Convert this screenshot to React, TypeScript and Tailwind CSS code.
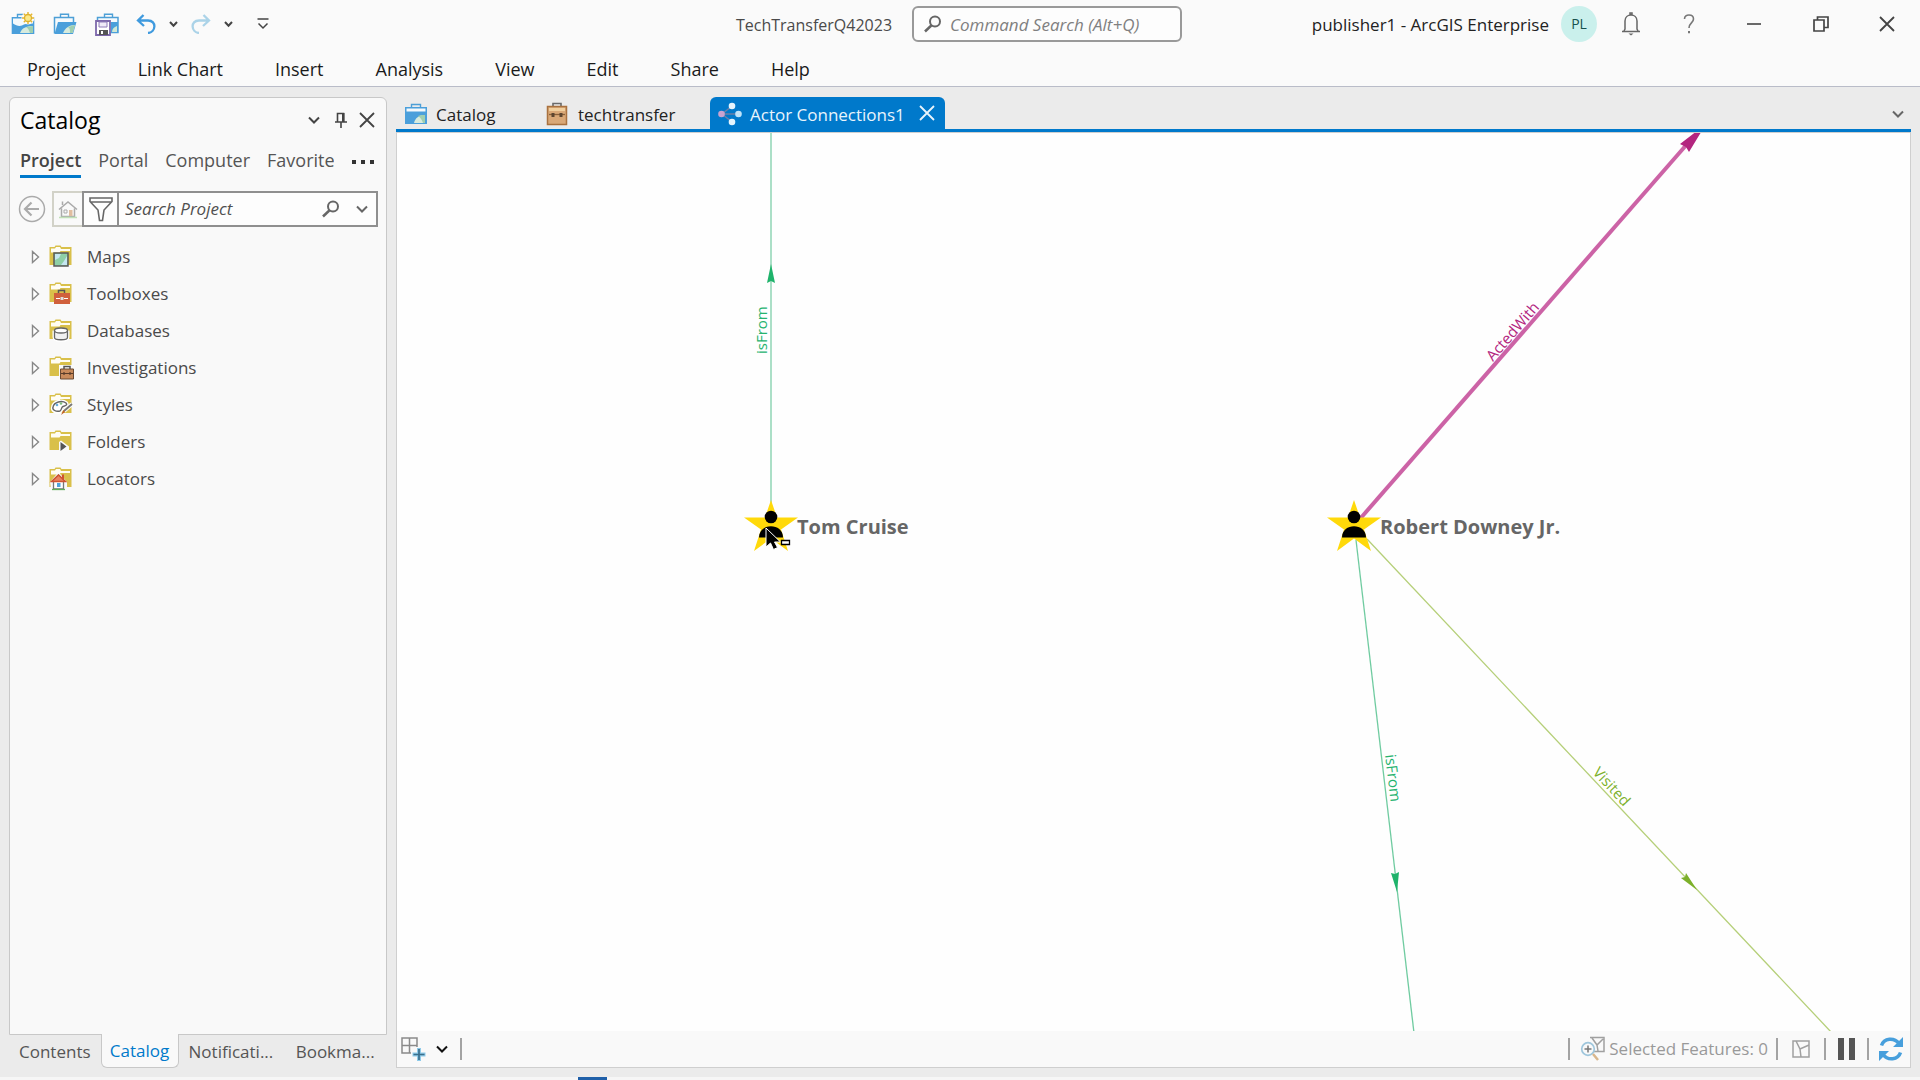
import { ReactNode, useState } from 'react';

const MENU = ['Project', 'Link Chart', 'Insert', 'Analysis', 'View', 'Edit', 'Share', 'Help'];
const CATALOG_TABS = ['Project', 'Portal', 'Computer', 'Favorites'];
const DOCK_TABS = ['Contents', 'Catalog', 'Notificati...', 'Bookma...'];

interface TreeItem {
  label: string;
  badge: ReactNode;
}

const TREE: TreeItem[] = [
  {
    label: 'Maps',
    badge: (
      <>
        <path d="M5 8h14v13H5z" fill="#8ecfa6" stroke="#5a5a5a" strokeWidth="1.5" />
        <path d="M6 9h6l-2 4-4 2zM18 20h-6l3-4 3-5z" fill="#c5e6f0" />
      </>
    ),
  },
  {
    label: 'Toolboxes',
    badge: (
      <>
        <path d="M9.5 11V8.5h6V11" fill="none" stroke="#555" strokeWidth="1.5" />
        <path d="M5 11h16v11H5z" fill="#d0603c" />
        <path d="M7 16.500h4M15 16.500h4" stroke="#fff" strokeWidth="1.2" />
        <path d="M11.500 15h3v3h-3z" fill="#ddd" />
      </>
    ),
  },
  {
    label: 'Databases',
    badge: (
      <>
        <path
          d="M5.500 11.500v6.500c0 4 13 4 13 0v-6.500"
          fill="#f4f4f4"
          stroke="#fff"
          strokeWidth="4"
        />
        <path d="M5.500 11.500v7c0 3 13 3 13 0v-7" fill="#f1f1f1" stroke="#666" strokeWidth="1.3" />
        <ellipse cx="12" cy="11.500" rx="6.500" ry="2.500" fill="#fff" stroke="#666" strokeWidth="1.3" />
      </>
    ),
  },
  {
    label: 'Investigations',
    badge: (
      <>
        <path d="M10 9h16v15H10z" fill="#fafafa" />
        <path d="M15 13v-2.500h6V13" fill="none" stroke="#555" strokeWidth="1.5" />
        <path d="M11.500 13h13v10h-13z" fill="#c98b5c" stroke="#6b4a33" strokeWidth="1" />
        <path d="M12 17.500h12M15 16v3M21 16v3" stroke="#5a3d2a" strokeWidth="1.2" />
      </>
    ),
  },
  {
    label: 'Styles',
    badge: (
      <>
        <path
          d="M4 14c1-5 9-7 13-4 2 2-1 3-3 3.500-2 1-1 3-3 5-4 1-8-1-7-4.500z"
          fill="#fff"
          stroke="#fff"
          strokeWidth="4"
        />
        <path
          d="M4 14c1-5 9-7 13-4 2 2-1 3-3 3.500-2 1-1 3-3 4.500-4 1-8-1-7-4z"
          fill="#fff"
          stroke="#666"
          strokeWidth="1.4"
        />
        <circle cx="8" cy="12" r="1.300" fill="#64aede" />
        <circle cx="12" cy="10.500" r="1.300" fill="#7fbf7f" />
        <path d="M23 11l-8 7" stroke="#fff" strokeWidth="4" />
        <path d="M23 11l-8 7" stroke="#777" strokeWidth="2" />
        <path d="M14.500 17l1.500 2-4 3z" fill="#c05f2c" />
      </>
    ),
  },
  {
    label: 'Folders',
    badge: (
      <>
        <path d="M10 12l2-1.500 8 6V21H10z" fill="#fafafa" />
        <path d="M11.500 12l6 4.500-6 4.500z" fill="#555" />
      </>
    ),
  },
  {
    label: 'Locators',
    badge: (
      <>
        <path d="M1 15L9.500 5 18 15v7H2z" fill="#fafafa" />
        <path d="M4.500 13v9h10v-9l-5-5z" fill="#fff" stroke="#777" strokeWidth="1.3" />
        <path d="M2.500 14.500h14L9.500 8z" fill="#e8825f" stroke="#cf5330" strokeWidth="1.5" />
        <path d="M14 7.500v5" stroke="#cf5330" strokeWidth="2" />
        <path d="M8 16h3.500v4H8z" fill="#4fa3dd" />
        <path d="M3 22.500h13" stroke="#5fae57" strokeWidth="1.300" />
      </>
    ),
  },
];

function Chevron({ className = 'text-[#444]' }: { className?: string }) {
  return (
    <svg width="12" height="8" viewBox="0 0 12 8" fill="none" className={className}>
      <path d="M1 1.500l5 5 5-5" stroke="currentColor" strokeWidth="2" />
    </svg>
  );
}

function SmallChevron() {
  return (
    <svg width="9" height="7" viewBox="0 0 9 7" fill="none">
      <path d="M1 1l3.500 3.800L8 1" stroke="#444" strokeWidth="2" />
    </svg>
  );
}

function CloseIcon({ className }: { className: string }) {
  return (
    <svg width="16" height="16" viewBox="0 0 16 16" fill="none" className={className}>
      <path d="M1 1l14 14M15 1L1 15" stroke="currentColor" strokeWidth="1.800" />
    </svg>
  );
}

function SearchIcon() {
  return (
    <svg width="18" height="18" viewBox="0 0 18 18" fill="none">
      <circle cx="11" cy="6.500" r="5" stroke="#666" strokeWidth="2" />
      <path d="M7.300 10.500L1 16.500" stroke="#666" strokeWidth="2.500" />
    </svg>
  );
}

function ProjectIcon() {
  return (
    <svg width="24" height="24" viewBox="0 0 24 24" fill="none">
      <path d="M7.500 5V2.500h9V5" stroke="#4d9fd6" strokeWidth="1.400" />
      <path d="M1 5h22v17H1z" fill="#4a9fdb" />
      <path d="M2.500 6.500h19v3H2.500z" fill="#f4f9fc" />
      <path d="M10 21c1-5 5-8 11-8v8z" fill="#d7ebdd" />
      <path d="M14 14c3 2 4 4 5 7h2v-8c-3 0-5 0-7 1z" fill="#9fcfb0" />
    </svg>
  );
}

function NewProjectIcon() {
  return (
    <svg width="24" height="24" viewBox="0 0 24 24" fill="none">
      <path d="M6.500 5V2.500h7V5" stroke="#4d9fd6" strokeWidth="1.400" />
      <path d="M.7 5h22.600v17H.7z" fill="#4a9fdb" />
      <path d="M2 6.500h20v5c-5 0-7 0-11 2-3 1-6 0-9-2z" fill="#f4f9fc" />
      <path d="M9 21c2-5 6-7 13-7v7z" fill="#d7ebdd" />
      <path d="M15 15c2 1 3 3 4 6h3v-7z" fill="#9fcfb0" />
      <circle cx="17" cy="6" r="6.500" fill="#fafafa" />
      <path
        d="M17 0v12M11 6h12M12.800 1.800l8.400 8.400M21.200 1.800l-8.400 8.400"
        stroke="#e3b62e"
        strokeWidth="1.400"
      />
      <circle cx="17" cy="6" r="3.500" fill="#fbe98a" stroke="#dfb12c" strokeWidth="1.300" />
    </svg>
  );
}

function OpenProjectIcon() {
  return (
    <svg width="24" height="24" viewBox="0 0 24 24" fill="none">
      <path d="M7.500 5V2.200h8V5" stroke="#4d9fd6" strokeWidth="1.400" />
      <path d="M1.500 21.500v-16h19v5" fill="#f6fafc" stroke="#4d9fd6" strokeWidth="1.500" />
      <path d="M5 10h18.500L20 22H1.500z" fill="#4a9fdb" />
      <path d="M10 21c2-5 6-8 12-8l-2.500 8z" fill="#d7ebdd" />
      <path d="M15 15c2 1 2 3 2 6h2.500l2.500-8z" fill="#9fcfb0" />
    </svg>
  );
}

function SaveIcon() {
  return (
    <svg width="25" height="24" viewBox="0 0 25 24" fill="none">
      <path d="M9.500 5V2.200h8V5" stroke="#4d9fd6" strokeWidth="1.400" />
      <path d="M2.500 10V5.500h20.500v15h-8" fill="#f6fafc" stroke="#4d9fd6" strokeWidth="1.500" />
      <path d="M16 10h7v11h-7z" fill="#4a9fdb" />
      <path d="M17 20c0-3 2-5 5-6v6z" fill="#cfe8d6" />
      <path d="M1 9h14v14H1z" fill="#fff" stroke="#7d68ab" strokeWidth="1.800" />
      <path d="M4 10h8v5H4z" fill="#efeaf7" stroke="#8f7cb8" strokeWidth="1" />
      <path d="M4 18h9v5H4z" fill="#555" />
      <path d="M6 19h2v3H6z" fill="#fff" />
    </svg>
  );
}

function UndoIcon({ className }: { className: string }) {
  return (
    <svg width="20" height="20" viewBox="0 0 20 20" fill="none" className={className}>
      <path d="M7.500 1L2 6.500 8 12M2.500 6.500H12c9 0 8 12 0 12.500" stroke="currentColor" strokeWidth="2.300" />
    </svg>
  );
}

function BriefcaseIcon() {
  return (
    <svg width="22" height="24" viewBox="0 0 22 24" fill="none">
      <path d="M7 4V1.500h8V4" stroke="#6a6a6a" strokeWidth="1.600" />
      <path d="M1.500 4.500h19v18h-19z" fill="#d9a877" stroke="#a9713f" strokeWidth="1.500" />
      <path d="M3 6h16v3H3z" fill="#f1cf9d" />
      <path d="M3 12.500h16" stroke="#8a6039" strokeWidth="1.300" />
      <path d="M5.500 11h3v4h-3zM13.500 11h3v4h-3z" fill="#5d4631" />
    </svg>
  );
}

function LinkChartIcon() {
  return (
    <svg width="24" height="24" viewBox="0 0 24 24" fill="none">
      <path d="M4 12L14 4M4 12h16M4 12l10 8" stroke="#6b7fa8" strokeWidth="1.500" />
      <circle cx="3.500" cy="12" r="3.300" fill="#c9a3d0" />
      <circle cx="14" cy="4" r="3.300" fill="#e4f4fd" />
      <circle cx="20.500" cy="12" r="3.300" fill="#bfe3fa" />
      <circle cx="14" cy="20" r="3.300" fill="#e4f4fd" />
    </svg>
  );
}

function FolderIcon({ badge }: { badge: ReactNode }) {
  return (
    <svg width="26" height="24" viewBox="0 0 26 24" fill="none" className="shrink-0">
      <path d="M.5 2h5l1-1.500h5l1 1.500h10v18H.5z" fill="#d9c04a" />
      <path d="M2 3.500h4l1-1.500h4l1 2h9v2H11.500l-1 1.500H2z" fill="#fffdf3" />
      {badge}
    </svg>
  );
}

function TitleBar() {
  return (
    <div className="flex h-12 items-center">
      <div className="flex flex-1 items-center pl-[11px]">
        <button type="button" aria-label="New project" className="mr-[18px]">
          <NewProjectIcon />
        </button>
        <button type="button" aria-label="Open project" className="mr-[18px]">
          <OpenProjectIcon />
        </button>
        <button type="button" aria-label="Save project" className="mr-4">
          <SaveIcon />
        </button>
        <button type="button" aria-label="Undo" className="mr-[13px]">
          <UndoIcon className="text-[#3f9ade]" />
        </button>
        <button type="button" aria-label="Undo history" className="mr-[13px]">
          <SmallChevron />
        </button>
        <button type="button" aria-label="Redo" className="mr-[13px]">
          <UndoIcon className="-scale-x-100 text-[#abd3e8]" />
        </button>
        <button type="button" aria-label="Redo history" className="mr-6">
          <SmallChevron />
        </button>
        <button type="button" aria-label="Customize quick access toolbar">
          <svg width="12" height="12" viewBox="0 0 12 12" fill="none">
            <path d="M.5 1h11M1.500 5.500L6 10l4.500-4.500" stroke="#444" strokeWidth="1.500" />
          </svg>
        </button>
      </div>

      <div className="flex items-center gap-5 pl-3">
        <span className="pt-0.5 text-base text-[#4a4a4a]">TechTransferQ42023</span>
        <label className="flex h-9 w-[270px] items-center gap-2 rounded-md border-2 border-[#999] bg-[#fdfdfd] px-2.5">
          <SearchIcon />
          <input
            type="text"
            aria-label="Command Search"
            placeholder="Command Search (Alt+Q)"
            className="min-w-0 flex-1 bg-transparent pt-0.5 text-[17px] italic outline-none placeholder:text-[#808080]"
          />
        </label>
      </div>

      <div className="flex flex-1 items-center justify-end pr-[25px]">
        <span className="mr-3 pt-0.5 text-[17px] whitespace-nowrap text-[#222]">publisher1 - ArcGIS Enterprise</span>
        <button
          type="button"
          className="mr-6 flex size-9 items-center justify-center rounded-full bg-[#caf0ec] text-sm text-[#17504c]"
        >
          PL
        </button>
        <button type="button" aria-label="Notifications" className="mr-[42px]">
          <svg width="20" height="24" viewBox="0 0 20 24" fill="none">
            <path
              d="M1 19.500h18M3 19l1-2V9c0-8 12-8 12 0v8l1 2M9 3V1h2v2"
              stroke="#666"
              strokeWidth="1.500"
            />
            <path d="M7.500 21.500h5L10 23.500z" fill="#666" />
          </svg>
        </button>
        <button type="button" aria-label="Help" className="mr-[52px]">
          <svg width="12" height="20" viewBox="0 0 12 20" fill="none">
            <path d="M1.500 5c0-5.500 9-5 9 0 0 4-4.500 4-4.500 9" stroke="#777" strokeWidth="1.600" />
            <path d="M5 17h2v2.200H5z" fill="#777" />
          </svg>
        </button>
        <button type="button" aria-label="Minimize" className="mr-[52px]">
          <svg width="14" height="16" viewBox="0 0 14 16">
            <path d="M0 8h14" stroke="#444" strokeWidth="1.600" />
          </svg>
        </button>
        <button type="button" aria-label="Restore" className="mr-[50px]">
          <svg width="16" height="16" viewBox="0 0 16 16" fill="none">
            <path d="M1 4h10v11H1zM4.500 4V1H15v10.500h-4" stroke="#444" strokeWidth="1.700" />
          </svg>
        </button>
        <button type="button" aria-label="Close">
          <CloseIcon className="text-[#444]" />
        </button>
      </div>
    </div>
  );
}

function CatalogPane() {
  const [tab, setTab] = useState('Project');

  return (
    <aside className="flex w-[378px] shrink-0 flex-col">
      <section className="flex flex-1 flex-col rounded-t-md border border-[#c8c8c8] bg-[#f9f9f9] px-2">
        <header className="flex h-11 items-center pl-0.5 pr-[3px]">
          <h2 className="flex-1 text-[23px] text-black">Catalog</h2>
          <button type="button" aria-label="Pane options" className="mr-[15px]">
            <Chevron />
          </button>
          <button type="button" aria-label="Auto hide" className="mr-3">
            <svg width="12" height="16" viewBox="0 0 12 16" fill="none">
              <path d="M2.500 10V1.500h6V10M0 10h12M6 10v6" stroke="#444" strokeWidth="1.600" />
              <path d="M7 1h2.500v9H7z" fill="#444" />
            </svg>
          </button>
          <button type="button" aria-label="Close pane">
            <CloseIcon className="text-[#444]" />
          </button>
        </header>

        <div className="flex h-9 items-stretch pl-0.5">
          <nav className="flex w-[314px] gap-[17px] overflow-hidden">
            {CATALOG_TABS.map((name) => (
              <button
                key={name}
                type="button"
                onClick={() => setTab(name)}
                className={
                  name === tab
                    ? 'shrink-0 border-b-3 border-[#0079cb] pt-0.5 text-lg font-semibold text-[#444]'
                    : 'shrink-0 border-b-3 border-transparent pt-0.5 text-lg text-[#555]'
                }
              >
                {name}
              </button>
            ))}
          </nav>
          <button type="button" aria-label="More tabs" className="ml-[18px] pt-1">
            <svg width="24" height="4" viewBox="0 0 24 4" fill="#333">
              <path d="M0 0h4v4H0zM9 0h4v4H9zM18 0h4v4h-4z" />
            </svg>
          </button>
        </div>

        <div className="mt-[13px] flex h-9 items-center">
          <button type="button" aria-label="Back" className="mr-1.5">
            <svg width="28" height="28" viewBox="0 0 28 28" fill="none">
              <circle cx="14" cy="14" r="12.500" stroke="#aaa" strokeWidth="1.500" />
              <path d="M21 14H8M13.500 7.500L7 14l6.500 6.500" stroke="#aaa" strokeWidth="2.200" />
            </svg>
          </button>
          <button
            type="button"
            aria-label="Home"
            className="flex h-9 w-[30px] items-center justify-center border-2 border-r-0 border-[#d2d2c8]"
          >
            <svg width="20" height="20" viewBox="0 0 20 20" fill="none">
              <path d="M3.500 9.500v8h13v-8M1 10.500l9-7.500 9 7.500M4.500 6V2.500" stroke="#aaa" strokeWidth="1.500" />
              <path d="M6 11h3v3H6z" stroke="#aaa" />
              <path d="M11 11h3.500v6H11z" fill="#e0bea0" />
              <path d="M1 18.500h18" stroke="#bfe0b5" strokeWidth="1.500" />
            </svg>
          </button>
          <button
            type="button"
            aria-label="Filter"
            className="flex h-9 w-[35px] items-center justify-center border-2 border-r-0 border-[#8f8f8f] bg-[#fdfdfd]"
          >
            <svg width="26" height="26" viewBox="0 0 26 26" fill="none">
              <path d="M2 2h22v3.500L16 14l-1.500 10.500h-3L10 14 2 5.500zM2.500 6h21" stroke="#666" strokeWidth="1.600" />
            </svg>
          </button>
          <label className="flex h-9 min-w-0 flex-1 items-center border-2 border-[#8f8f8f] bg-[#fdfdfd] pl-1.5 pr-2">
            <input
              type="text"
              aria-label="Search Project"
              placeholder="Search Project"
              className="min-w-0 flex-1 bg-transparent text-[17px] italic outline-none placeholder:text-[#505050]"
            />
            <SearchIcon />
            <span className="ml-4">
              <Chevron className="text-[#666]" />
            </span>
          </label>
        </div>

        <ul className="mt-[11px]">
          {TREE.map((item) => (
            <li key={item.label}>
              <button type="button" className="flex h-[37px] items-center pl-[13px] text-[17px] text-[#4a4a4a]">
                <svg width="10" height="14" viewBox="0 0 10 14" fill="none" className="mr-2">
                  <path d="M1.500 1.500l6 5.500-6 5.500z" fill="#fff" stroke="#888" strokeWidth="1.400" />
                </svg>
                <FolderIcon badge={item.badge} />
                <span className="ml-3">{item.label}</span>
              </button>
            </li>
          ))}
        </ul>
      </section>

      <nav className="flex h-[33px]">
        {DOCK_TABS.map((name) => (
          <button
            key={name}
            type="button"
            className={
              name === 'Catalog'
                ? '-mt-px w-[78px] rounded-b-md border border-t-0 border-[#c8c8c8] bg-[#f9f9f9] text-[17px] text-[#0079cb]'
                : 'px-2.5 text-[17px] text-[#555] last:flex-1'
            }
          >
            {name}
          </button>
        ))}
      </nav>
    </aside>
  );
}

function ActorNode({ x, y, name }: { x: number; y: number; name: string }) {
  return (
    <g transform={`translate(${x} ${y})`}>
      <path
        d="M0 -26L6 -8.500H27L10 3.500 17 25 0 12.500 -17 25 -10 3.500 -27 -8.500H-6z"
        fill="#ffd90a"
      />
      <circle cx="0" cy="-9" r="6.300" fill="#000" />
      <path d="M-12 11.500c0-15 24-15 24 0z" fill="#000" />
      <text x="26" y="8" fontSize="20" fontWeight="700" fill="#666">
        {name}
      </text>
    </g>
  );
}

function LinkChart() {
  return (
    <div className="relative flex-1 overflow-hidden bg-[#fefefe]">
      <svg className="absolute inset-0 h-full w-full" role="img" aria-label="Actor connections">
        <path d="M374 0v370" stroke="#8fd5b4" strokeWidth="1.500" />
        <path d="M374 131l4 19-4-2-4 2z" fill="#1fb36b" />
        <text transform="translate(370 221) rotate(-90)" fontSize="15" fill="#26b36f">
          isFrom
        </text>

        <path d="M962 387L1291 10" stroke="#cc63a6" strokeWidth="4" />
        <path d="M1309 -9L1292 19l-3-5-6-3z" fill="#b3257f" />
        <text transform="translate(1096 229) rotate(-49)" fontSize="15" fill="#b3257f">
          ActedWith
        </text>

        <path d="M959 407L1017 900" stroke="#6fcba0" strokeWidth="1.300" />
        <path d="M1000 759l-6-19 4 1 4-2z" fill="#1fb36b" />
        <text transform="translate(988 622) rotate(83)" fontSize="15" fill="#26b36f">
          isFrom
        </text>

        <path d="M970 406L1435 900" stroke="#b5cf78" strokeWidth="1.300" />
        <path d="M1300 757l-16-12 4-1 1-4z" fill="#7cb02a" />
        <text transform="translate(1195 640) rotate(47)" fontSize="15" fill="#7cb02a">
          Visited
        </text>

        <ActorNode x={374} y={393} name="Tom Cruise" />
        <ActorNode x={957} y={393} name="Robert Downey Jr." />

        {/* deselect cursor */}
        <path d="M369 395v19l4.500-4 3 6.500 4-2-3-5.500h6z" fill="#000" stroke="#fff" strokeWidth="1" />
        <path d="M384.500 407.500h8v4h-8z" fill="#fff" stroke="#000" strokeWidth="1.300" />
      </svg>
    </div>
  );
}

function Divider() {
  return <span className="h-[22px] w-0.5 bg-[#a3a3a3]" />;
}

function StatusBar() {
  return (
    <footer className="flex h-9 items-center bg-[#f9f9f9] pl-1 pr-[7px]">
      <button type="button" aria-label="Add view" className="mr-2.5">
        <svg width="25" height="24" viewBox="0 0 25 24" fill="none">
          <path d="M1 1h15v15H1zM8.500 1v15M1 8.500h15" stroke="#8a8a8a" strokeWidth="1.500" />
          <path d="M10 10h15v14H10z" fill="#f9f9f9" />
          <path d="M18 11v13M11.500 17.500h13" stroke="#8fcbea" strokeWidth="4" />
          <path d="M18 12v11M12.500 17.500h11" stroke="#3b6f8c" strokeWidth="1.700" />
        </svg>
      </button>
      <button type="button" aria-label="View list" className="mr-3">
        <Chevron className="text-[#111]" />
      </button>
      <Divider />
      <div className="ml-auto flex items-center">
        <Divider />
        <svg width="26" height="26" viewBox="0 0 26 26" fill="none" className="ml-2.5">
          <path d="M10 1.500h14v14H12M12 2l5 7 6-6M17 9l1 6" stroke="#a0a0a0" strokeWidth="1.500" />
          <circle cx="8" cy="13" r="6.300" fill="#f9f9f9" stroke="#9fc6dc" strokeWidth="1.700" />
          <path d="M8 9.500v7M4.500 13h7" stroke="#777" strokeWidth="1.500" />
          <path d="M13 18l5 6" stroke="#d8b68c" strokeWidth="2.500" />
        </svg>
        <span className="ml-[3px] mr-2 text-[17px] text-[#999]">Selected Features: 0</span>
        <Divider />
        <button type="button" aria-label="Clear selection" className="mx-3.5">
          <svg width="18" height="18" viewBox="0 0 18 18" fill="none">
            <path d="M1 1h16v16H1zM4 1l4 8 9-4M8 9l1 8" stroke="#a0a0a0" strokeWidth="1.500" />
          </svg>
        </button>
        <Divider />
        <button type="button" aria-label="Pause drawing" className="mx-3">
          <svg width="17" height="22" viewBox="0 0 17 22" fill="#555">
            <path d="M0 0h6v22H0zM11 0h6v22h-6z" />
          </svg>
        </button>
        <Divider />
        <button type="button" aria-label="Refresh" className="ml-2.5">
          <svg width="24" height="24" viewBox="0 0 24 24" fill="none">
            <path d="M2.500 8.500C5 1 15 0 20 6.500M21.500 15.500C19 23 9 24 4 17.500" stroke="#479fdc" strokeWidth="3.500" />
            <path d="M24 0v10H14zM0 24V14h10z" fill="#479fdc" />
          </svg>
        </button>
      </div>
    </footer>
  );
}

function ChartView() {
  return (
    <main className="flex min-w-0 flex-1 flex-col">
      <div className="flex h-8 items-stretch text-[17px] text-[#222]">
        <button type="button" className="flex w-[138px] items-center gap-2 pl-2 pt-0.5">
          <ProjectIcon />
          <span className="pt-0.5">Catalog</span>
        </button>
        <button type="button" className="flex w-[176px] items-center gap-2.5 pl-3 pt-0.5">
          <BriefcaseIcon />
          <span className="pt-0.5">techtransfer</span>
        </button>
        <div className="flex items-center rounded-t-md bg-[#0079cb] pl-2 pr-2.5 text-[#e8f4fc]">
          <button type="button" className="mr-3.5 flex items-center gap-2 whitespace-nowrap pt-0.5">
            <LinkChartIcon />
            <span className="pt-0.5">Actor Connections1</span>
          </button>
          <button type="button" aria-label="Close Actor Connections1">
            <CloseIcon className="text-[#e8f4fc]" />
          </button>
        </div>
        <button type="button" aria-label="Open views" className="ml-auto mr-[7px] pt-0.5">
          <Chevron className="text-[#666]" />
        </button>
      </div>
      <div className="h-[3px] bg-[#0079cb]" />
      <div className="flex flex-1 flex-col border border-[#cfcfcf]">
        <LinkChart />
        <StatusBar />
      </div>
    </main>
  );
}

export default function App() {
  return (
    <div className="flex min-h-screen flex-col bg-[#ebebeb] font-['Open_Sans','Noto_Sans',sans-serif]">
      <header className="border-b border-[#b9bcc8] bg-[#fafafa]">
        <TitleBar />
        <nav className="flex h-[38px] gap-[52px] pl-[27px] pt-1">
          {MENU.map((item) => (
            <button key={item} type="button" className="text-lg text-[#1a1a1a]">
              {item}
            </button>
          ))}
        </nav>
      </header>

      <div className="flex flex-1 gap-[9px] px-[9px] pt-2.5 pb-[9px]">
        <CatalogPane />
        <ChartView />
      </div>

      <div className="flex h-[3px] bg-[#f6f6f6]">
        <span className="ml-[578px] w-[29px] bg-[#1f5fa8]" />
      </div>
    </div>
  );
}
